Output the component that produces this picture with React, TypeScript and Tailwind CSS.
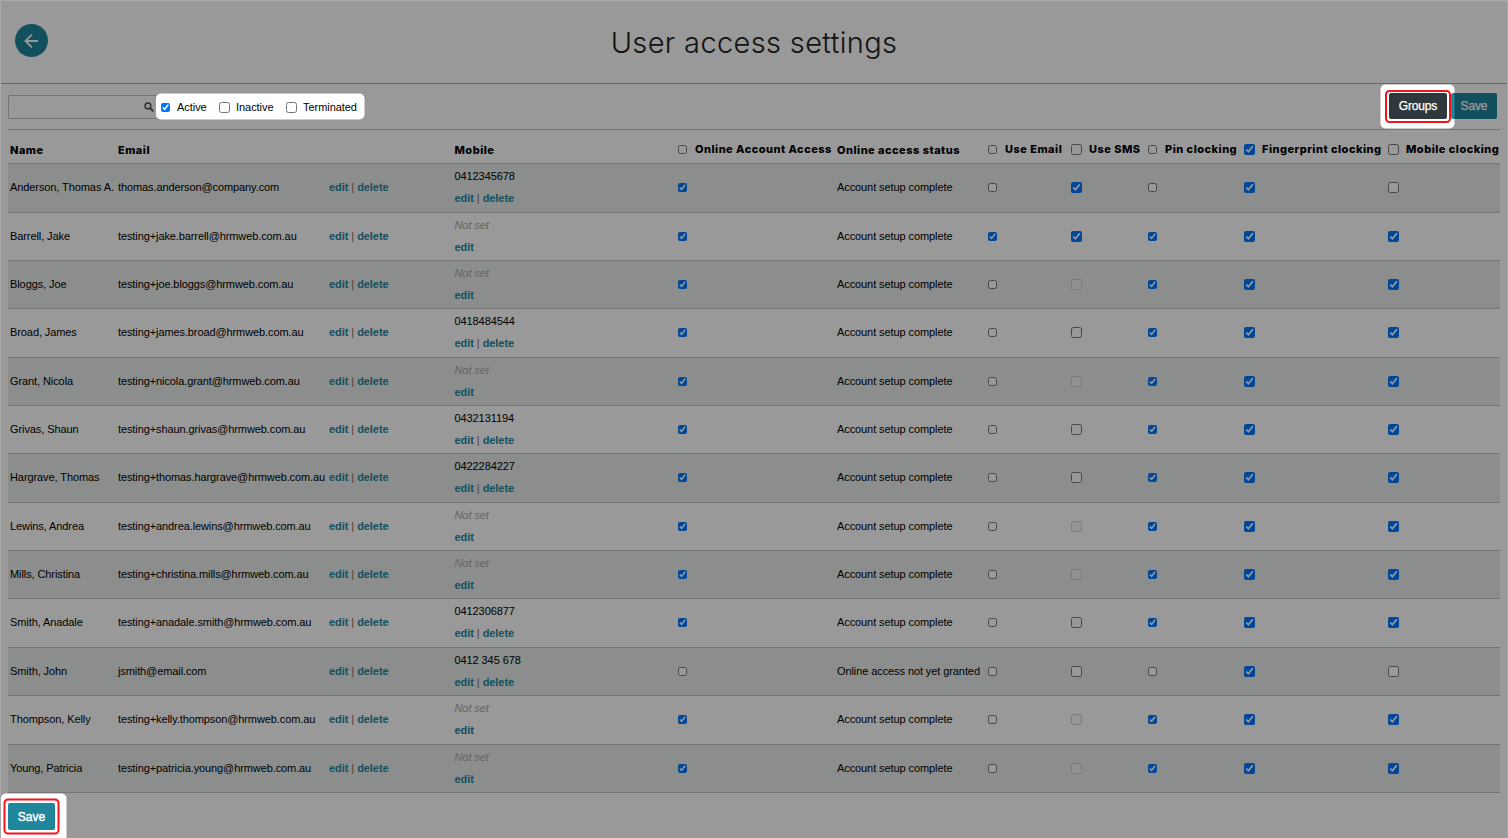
import clsx from "clsx";

// 1 = checked, 0 = unchecked, -1 = disabled
type Flag = 1 | 0 | -1;

type User = {
  name: string;
  email: string;
  mobile?: string;
  access: Flag;
  flags: Flag[];
  tall?: boolean;
};

const users: User[] = [
  { name: "Anderson, Thomas A.", email: "thomas.anderson@company.com", mobile: "0412345678", access: 1, flags: [0, 1, 0, 1, 0], tall: true },
  { name: "Barrell, Jake", email: "testing+jake.barrell@hrmweb.com.au", access: 1, flags: [1, 1, 1, 1, 1] },
  { name: "Bloggs, Joe", email: "testing+joe.bloggs@hrmweb.com.au", access: 1, flags: [0, -1, 1, 1, 1] },
  { name: "Broad, James", email: "testing+james.broad@hrmweb.com.au", mobile: "0418484544", access: 1, flags: [0, 0, 1, 1, 1], tall: true },
  { name: "Grant, Nicola", email: "testing+nicola.grant@hrmweb.com.au", access: 1, flags: [0, -1, 1, 1, 1] },
  { name: "Grivas, Shaun", email: "testing+shaun.grivas@hrmweb.com.au", mobile: "0432131194", access: 1, flags: [0, 0, 1, 1, 1] },
  { name: "Hargrave, Thomas", email: "testing+thomas.hargrave@hrmweb.com.au", mobile: "0422284227", access: 1, flags: [0, 0, 1, 1, 1], tall: true },
  { name: "Lewins, Andrea", email: "testing+andrea.lewins@hrmweb.com.au", access: 1, flags: [0, -1, 1, 1, 1] },
  { name: "Mills, Christina", email: "testing+christina.mills@hrmweb.com.au", access: 1, flags: [0, -1, 1, 1, 1] },
  { name: "Smith, Anadale", email: "testing+anadale.smith@hrmweb.com.au", mobile: "0412306877", access: 1, flags: [0, 0, 1, 1, 1], tall: true },
  { name: "Smith, John", email: "jsmith@email.com", mobile: "0412 345 678", access: 0, flags: [0, 0, 0, 1, 0] },
  { name: "Thompson, Kelly", email: "testing+kelly.thompson@hrmweb.com.au", access: 1, flags: [0, -1, 1, 1, 1], tall: true },
  { name: "Young, Patricia", email: "testing+patricia.young@hrmweb.com.au", access: 1, flags: [0, -1, 1, 1, 1] },
];

const columns =
  "grid grid-cols-[108px_211px_125.5px_223.5px_159px_151px_83px_77px_96px_144px_1fr] items-center pl-[2px] whitespace-nowrap";

// sms, fingerprint and mobile use the bigger box
const bigFlag = [false, true, false, true, true];

function Check({ value, big }: { value: Flag; big?: boolean }) {
  return (
    <input
      type="checkbox"
      checked={value === 1}
      disabled={value === -1}
      readOnly
      className={clsx("block shrink-0", big ? "size-[11px]" : "size-[9px]")}
    />
  );
}

function HeadCheck({ label, value = 0, big }: { label: string; value?: Flag; big?: boolean }) {
  return (
    <label className={clsx("flex items-center", big ? "gap-[7px]" : "gap-2")}>
      <Check value={value} big={big} />
      <span className="-mt-px">{label}</span>
    </label>
  );
}

function Links({ canDelete }: { canDelete: boolean }) {
  return (
    <div className="font-bold tracking-[-0.06px] text-[#1f869b]">
      <a>edit</a>
      {canDelete && (
        <>
          <span className="font-normal text-[#8a6a5a]"> | </span>
          <a>delete</a>
        </>
      )}
    </div>
  );
}

function Row({ user, striped }: { user: User; striped: boolean }) {
  return (
    <div
      className={clsx(
        columns,
        "border-b border-[#c4c4c4] tracking-[-0.09px]",
        user.tall ? "h-[49px] pb-px" : "h-12",
        striped && "bg-[#e8edea]"
      )}
    >
      <div>{user.name}</div>
      <div className="tracking-[-0.1px]">{user.email}</div>
      <Links canDelete />
      <div className="-mt-0.5 leading-[22px]">
        {user.mobile ? <div>{user.mobile}</div> : <div className="italic text-[#aaa]">Not set</div>}
        <Links canDelete={!!user.mobile} />
      </div>
      <Check value={user.access} />
      <div>{user.access ? "Account setup complete" : "Online access not yet granted"}</div>
      {user.flags.map((f, i) => (
        <Check key={i} value={f} big={bigFlag[i]} />
      ))}
    </div>
  );
}

// Dims the page except for the highlighted controls
function Spotlight() {
  return (
    <svg className="absolute inset-0 pointer-events-none" width="1508" height="838">
      <defs>
        <mask id="holes">
          <rect width="1508" height="838" fill="#fff" />
          <rect x="156" y="93.5" width="208.5" height="26" rx="5" fill="#000" />
          <rect x="1380.5" y="84.5" width="74" height="44" rx="5" fill="#000" />
          <rect x="1" y="793.5" width="65.5" height="60" rx="5" fill="#000" />
        </mask>
      </defs>
      <rect width="1508" height="838" fill="#000" fillOpacity="0.4" mask="url(#holes)" />
      <g fill="none" stroke="#f5141c" strokeWidth="2">
        <rect x="1386" y="91" width="64" height="31" rx="3.5" />
        <rect x="4.5" y="799.5" width="54" height="34" rx="3.5" />
      </g>
    </svg>
  );
}

export default function App() {
  return (
    <div className="relative w-[1508px] h-[838px] overflow-hidden bg-white border border-b-0 border-[#aaa] text-[11px] text-black font-['Liberation_Sans',Arial,sans-serif]">
      <header className="relative flex items-center justify-center h-[83px] border-b border-[#aaa]">
        <button className="absolute left-3.5 top-[23px] flex items-center justify-center size-[33px] rounded-full bg-[#1f869b] text-white">
          <svg width="33" height="33" fill="none" stroke="currentColor" strokeWidth="1.8">
            <path d="M23 17H10.5M16.8 10.7L10.5 17L16.8 23.3" />
          </svg>
        </button>
        <h1 className="pt-0.5 text-[29px] font-light text-[#222] tracking-[0.35px] font-['Inter',sans-serif]">
          User access settings
        </h1>
      </header>

      <main className="pl-[7px] pr-[7px]">
        <div className="flex items-center h-[46px] border-b border-[#c4c4c4]">
          <div className="flex items-center justify-end w-[148px] h-6 pr-0.5 pt-px border border-r-0 border-[#c4c4c4] rounded-l-xs text-[#555]">
            <svg width="10" height="10" fill="none" stroke="currentColor" strokeWidth="1.5">
              <circle cx="3.9" cy="3.9" r="2.9" />
              <path d="M6 6L9.4 9.4" strokeWidth="1.8" />
            </svg>
          </div>
          <div className="flex items-center pl-[5px] pt-0.5 tracking-[-0.05px]">
            <Check value={1} />
            <span className="ml-[7px] w-[42px]">Active</span>
            <Check value={0} big />
            <span className="ml-1.5 w-[50px]">Inactive</span>
            <Check value={0} big />
            <span className="ml-1.5">Terminated</span>
          </div>
          <div className="flex gap-1 ml-auto mr-[3px] -mt-px text-xs tracking-[-0.15px] text-white [-webkit-text-stroke:0.25px_white]">
            <button className="w-[58px] h-[26px] rounded-xs bg-[#2f383c]">Groups</button>
            <button className="w-[46px] h-[26px] rounded-xs bg-[#1f869b]">Save</button>
          </div>
        </div>

        <div className={clsx(columns, "h-[34px] pt-1.5 border-b border-[#c4c4c4] font-extrabold tracking-[0.48px] font-['Inter',sans-serif]")}>
          <div className="pt-px">Name</div>
          <div className="pt-px">Email</div>
          <div />
          <div className="pt-px">Mobile</div>
          <HeadCheck label="Online Account Access" />
          <div className="pt-px">Online access status</div>
          <HeadCheck label="Use Email" />
          <HeadCheck label="Use SMS" big />
          <HeadCheck label="Pin clocking" />
          <HeadCheck label="Fingerprint clocking" value={1} big />
          <HeadCheck label="Mobile clocking" big />
        </div>

        {users.map((user, i) => (
          <Row key={user.email} user={user} striped={i % 2 === 0} />
        ))}

        <button className="mt-2.5 block w-[47px] h-[27px] rounded-xs bg-[#1f869b] text-xs text-white [-webkit-text-stroke:0.4px_white]">
          Save
        </button>
      </main>

      <div className="absolute -inset-px">
        <Spotlight />
      </div>
    </div>
  );
}
